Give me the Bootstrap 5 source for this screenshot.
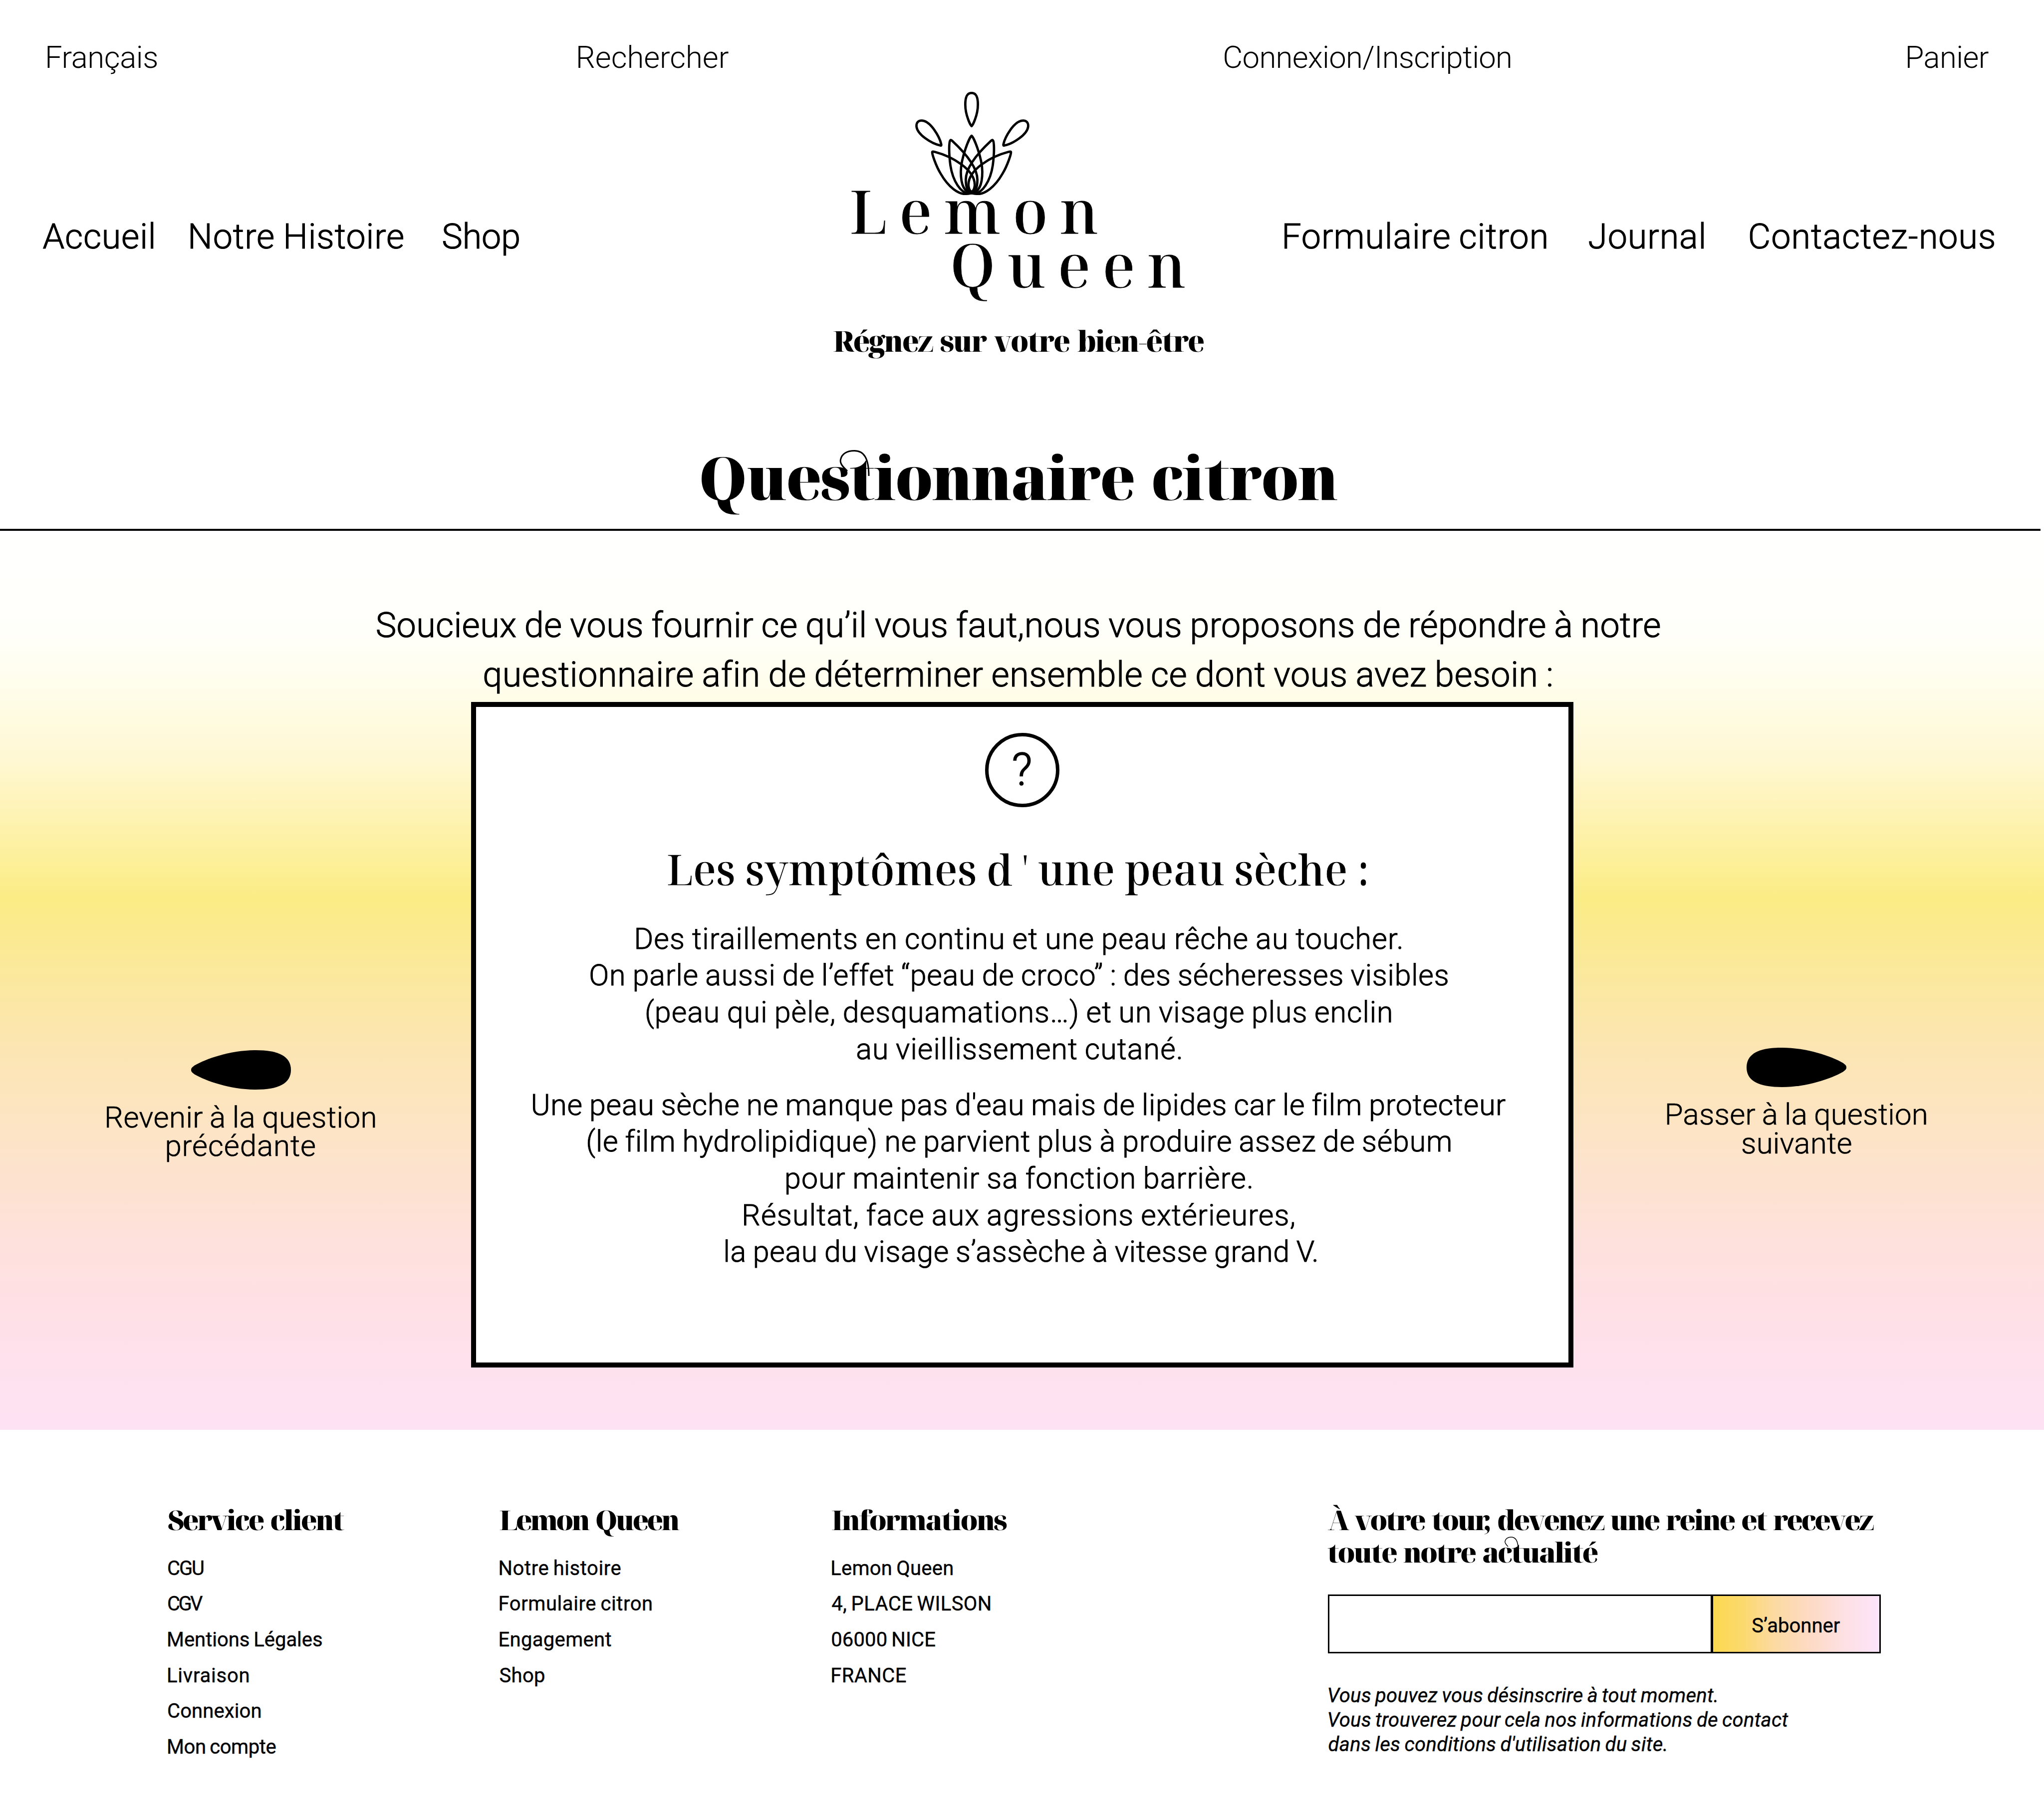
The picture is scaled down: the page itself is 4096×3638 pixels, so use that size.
<!DOCTYPE html>
<html lang="fr">
<head>
<meta charset="utf-8">
<meta name="viewport" content="width=device-width, initial-scale=1">
<title>Lemon Queen – Questionnaire citron</title>
<link href="https://cdn.jsdelivr.net/npm/bootstrap@5.3.0/dist/css/bootstrap.min.css" rel="stylesheet">
<style>
  body { font-family: Roboto, "Liberation Sans", sans-serif; font-weight: 300; color: #000; background: #fff; overflow-x: hidden; word-spacing: -2px; }
  a { color: inherit; text-decoration: none; }
  .display-face { font-family: "Noto Serif Display", "Liberation Serif", serif; font-weight: 500; word-spacing: 0; }
  .fat-face { font-family: "Noto Serif Display", "Liberation Serif", serif; font-weight: 900; word-spacing: .1em; }
  .fit { display: inline-block; white-space: nowrap; text-align: left; }

  /* Header */
  .site-header { height: 1060px; }
  .top-links { padding: 69px 0 0 95px; font-size: 61.6px; line-height: 92px; }
  .main-row { margin-top: 23px; }
  .main-links { padding-top: 240px; font-size: 70px; line-height: 100px; -webkit-text-stroke: 1.1px #000; }
  .brand { width: 742px; margin-left: 630px; margin-right: 162px; }
  .brand-crown { width: 229px; height: 207px; margin: 0 0 -23px 164px; }
  .brand-name { font-size: 119px; line-height: 108px; -webkit-text-stroke: .8px #000; }
  .brand-name .second { padding-left: 240px; }
  .brand-name .first { padding-left: 36.6px; }
  .tagline { font-size: 57px; line-height: 80px; margin-top: 59px; }
  .page-title { font-size: 120px; line-height: 160px; margin: 153px 0 0; padding-right: 10px; word-spacing: .08em; }
  .swash { position: absolute; fill: none; stroke: #000; overflow: visible; }
  .rule { width: 4089px; height: 3.5px; background: #000; }

  /* Questionnaire */
  .quiz { height: 1802.5px; padding-top: 140px;
    background: linear-gradient(180deg, #fff 0, #fffffd 80px, #fffffa 200px, #fffdea 321px, #fff8d4 454px, #fef3b6 562px, #fcef94 680px, #fbec85 736px, #fbe99b 874px, #fce5b3 1042px, #fde4c9 1235px, #fee1da 1403px, #fee0e6 1559px, #fde2f4 100%); }
  .intro { font-size: 70px; line-height: 99px; padding-right: 14px; -webkit-text-stroke: 1.1px #000; }
  .quiz-row { margin-top: 5.5px; }
  .step { font-size: 60px; line-height: 57.4px; -webkit-text-stroke: .7px #000; }
  .step svg { width: 200px; height: 79px; margin-bottom: 26.6px; }
  .step-prev { width: 943.5px; padding: 698px 0 0 22px; }
  .step-next { width: 943.5px; padding: 692.5px 48px 0 0; }
  .quiz-card { width: 2209px; height: 1334px; border: 10px solid #000; border-radius: 0; background: #fff; padding-top: 51.5px; }
  .help-mark { width: 149px; height: 149px; border: 7px solid #000; font-size: 91px; font-weight: 300; -webkit-text-stroke: 1.4px #000; }
  .quiz-card h2 { font-size: 83px; line-height: 110px; margin: 69px 18px 0 0; -webkit-text-stroke: .8px #000; }
  .quiz-card h2 i { font-style: normal; font-weight: 300; -webkit-text-stroke: 0; }
  .quiz-card p { font-size: 59px; line-height: 73.7px; margin: 0 12px 0 0; -webkit-text-stroke: 1px #000; }
  .quiz-card .para-one { margin-top: 48px; }
  .quiz-card .para-two { margin-top: 38.3px; }

  /* Footer */
  .site-footer { padding: 146.5px 0 0 337px; font-size: 40px; font-weight: 400; -webkit-text-stroke: .4px #000; }
  .site-footer h3 { font-size: 55px; line-height: 65.6px; margin: 0; -webkit-text-stroke: 0; }
  .foot-a { width: 664.5px; } .foot-b { width: 665.7px; } .foot-c { width: 993.4px; }
  .foot-list { margin-top: 29.7px; line-height: 71.6px; }
  .subscribe { width: 1108px; height: 118px; margin-top: 52.4px; }
  .subscribe .form-control { border: 3.3px solid #000; border-radius: 0; }
  .subscribe .btn { width: 339px; border: 3.3px solid #000; border-radius: 0; padding: 7px 0 0; font-size: 40px; color: #000;
    background: linear-gradient(90deg, #fdd94f 0, #fbd96e 18%, #fcdaa0 36%, #fddac4 58%, #fde0e2 78%, #fde4fb 100%); }
  .legal { margin: 60px 0 0 2px; line-height: 49.2px; font-style: italic; }
</style>
</head>
<body>
<header class="site-header">
  <nav class="top-links d-flex">
    <a href="#"><span class="fit" data-w="219.3">Français</span></a>
    <a href="#" style="margin-left:844.4px"><span class="fit" data-w="301">Rechercher</span></a>
    <a href="#" style="margin-left:993.6px"><span class="fit" data-w="573.8">Connexion/Inscription</span></a>
    <a href="#" style="margin-left:795.4px"><span class="fit" data-w="162.3">Panier</span></a>
  </nav>
  <div class="main-row d-flex align-items-start">
    <nav class="main-links d-flex" style="margin-left:86.4px">
      <a href="#"><span class="fit" data-w="220.3">Accueil</span></a>
      <a href="#" style="margin-left:75.4px"><span class="fit" data-w="425.9">Notre Histoire</span></a>
      <a href="#" style="margin-left:80.4px"><span class="fit" data-w="151.8">Shop</span></a>
    </nav>
    <div class="brand d-flex flex-column align-items-start flex-shrink-0">
      <svg class="brand-crown" viewBox="0 0 279.3 252.6" fill="none" stroke="#000" stroke-width="5.8" stroke-linejoin="round">
        <path d="M137.8 84C136 84 122.4 58 122.4 31C122.4 10 128 2.8 137.8 2.8C147.6 2.8 153.2 10 153.2 31C153.2 58 139.6 84 137.8 84Z"/>
        <g id="drop"><path d="M62 131.5C40 127 3 104 3 83C3 74 9 70.3 15.3 70.3C38 70.3 60 112 63.5 128C64 131 63.5 132 62 131.5Z"/></g>
        <use href="#drop" transform="translate(279.2) scale(-1 1)"/>
        <path d="M137.8 107.5C134 108 111.5 160 111.5 196C111.5 230 122 246 137.8 248C153.6 246 164 230 164 196C164 160 141.6 108 137.8 107.5Z"/>
        <g id="petals">
          <path d="M86 118.5C82 122 82 150 86 180C92 220 112 247 130 249C146 250 152 236 152 215C152 180 110 138 90 119.5C88 118 87 117.5 86 118.5Z"/>
          <path d="M41.5 147.5C41 152 50 180 62 200C82 235 106 250 122 250C138 250 145 240 145.5 228C146 190 90 158 48 147C44 146 41.8 146 41.5 147.5Z"/>
        </g>
        <use href="#petals" transform="translate(275.6) scale(-1 1)"/>
      </svg>
      <div class="brand-name display-face">
        <div class="first"><span class="fit" data-w="492.1">Lemon</span></div>
        <div class="second"><span class="fit" data-w="463.9">Queen</span></div>
      </div>
      <div class="tagline fat-face"><span class="fit" data-w="741.9">Régnez sur votre bien-être</span></div>
    </div>
    <nav class="main-links d-flex">
      <a href="#"><span class="fit" data-w="524.5">Formulaire citron</span></a>
      <a href="#" style="margin-left:85.6px"><span class="fit" data-w="229.3">Journal</span></a>
      <a href="#" style="margin-left:93.2px"><span class="fit" data-w="489.3">Contactez-nous</span></a>
    </nav>
  </div>
  <h1 class="page-title fat-face text-center">
    <span class="position-relative d-inline-block"><span class="fit" data-w="1275">Questionnaire citron</span><svg class="swash" style="left:277px;top:26px" width="62" height="56" viewBox="0 0 62 56" stroke-width="3"><path d="M15 42C4 32 0 26 1.5 19C4 7 15 1.5 29 1.5C48 1.5 58 16 58 52"/></svg></span>
  </h1>
</header>
<div class="rule"></div>

<main class="quiz">
  <div class="intro d-flex flex-column align-items-center">
    <span class="fit" data-w="2570.5">Soucieux de vous fournir ce qu’il vous faut,nous vous proposons de répondre à notre</span>
    <span class="fit me-1" data-w="2137.7">questionnaire afin de déterminer ensemble ce dont vous avez besoin :</span>
  </div>
  <div class="quiz-row d-flex align-items-start">
    <a href="#" class="step step-prev d-flex flex-column align-items-center">
      <svg viewBox="0 0 200 79"><path id="seed" d="M0 39.5C0 36 2 34 7 30.5C30 17 80 0 129 0C175 0 200 12 200 39.5C200 67 175 79 129 79C80 79 30 62 7 48.5C2 45 0 43 0 39.5Z"/></svg>
      <span class="fit" data-w="537.5">Revenir à la question</span>
      <span class="fit" data-w="296.7">précédante</span>
    </a>
    <section class="quiz-card card d-flex flex-column align-items-center flex-shrink-0">
      <div class="help-mark rounded-circle d-flex align-items-center justify-content-center">?</div>
      <h2 class="display-face"><span class="fit" data-w="1401.5">Les symptômes d <i>'</i> une peau sèche :</span></h2>
      <p class="para-one d-flex flex-column align-items-center">
        <span class="fit" data-w="1533.2">Des tiraillements en continu et une peau rêche au toucher.</span>
        <span class="fit" data-w="1717.4">On parle aussi de l’effet “peau de croco” : des sécheresses visibles</span>
        <span class="fit" data-w="1492">(peau qui pèle, desquamations…) et un visage plus enclin</span>
        <span class="fit" data-w="649.5">au vieillissement cutané.</span>
      </p>
      <p class="para-two d-flex flex-column align-items-center">
        <span class="fit" data-w="1948.5">Une peau sèche ne manque pas d'eau mais de lipides car le film protecteur</span>
        <span class="fit" data-w="1727.6">(le film hydrolipidique) ne parvient plus à produire assez de sébum</span>
        <span class="fit" data-w="931.8">pour maintenir sa fonction barrière.</span>
        <span class="fit" data-w="1101.6">Résultat, face aux agressions extérieures,</span>
        <span class="fit ms-2" data-w="1184.9">la peau du visage s’assèche à vitesse grand V.</span>
      </p>
    </section>
    <a href="#" class="step step-next d-flex flex-column align-items-center">
      <svg viewBox="0 0 200 79"><use href="#seed" transform="translate(200) scale(-1 1)"/></svg>
      <span class="fit" data-w="519.1">Passer à la question</span>
      <span class="fit" data-w="218.6">suivante</span>
    </a>
  </div>
</main>

<footer class="site-footer d-flex">
  <div class="foot-a">
    <h3 class="fat-face"><span class="fit" data-w="353.3">Service client</span></h3>
    <ul class="foot-list list-unstyled mb-0">
      <li><span class="fit" data-w="71">CGU</span></li>
      <li><span class="fit" data-w="69">CGV</span></li>
      <li><span class="fit" data-w="308">Mentions Légales</span></li>
      <li><span class="fit" data-w="161.5">Livraison</span></li>
      <li><span class="fit" data-w="185.5">Connexion</span></li>
      <li><span class="fit" data-w="215.5">Mon compte</span></li>
    </ul>
  </div>
  <div class="foot-b">
    <h3 class="fat-face"><span class="fit" data-w="360.5">Lemon Queen</span></h3>
    <ul class="foot-list list-unstyled mb-0">
      <li><span class="fit" data-w="242">Notre histoire</span></li>
      <li><span class="fit" data-w="304.5">Formulaire citron</span></li>
      <li><span class="fit" data-w="223">Engagement</span></li>
      <li><span class="fit" data-w="89.5">Shop</span></li>
    </ul>
  </div>
  <div class="foot-c">
    <h3 class="fat-face"><span class="fit" data-w="350.9">Informations</span></h3>
    <ul class="foot-list list-unstyled mb-0">
      <li><span class="fit" data-w="242">Lemon Queen</span></li>
      <li><span class="fit" data-w="317.5">4, PLACE WILSON</span></li>
      <li><span class="fit" data-w="207">06000 NICE</span></li>
      <li><span class="fit" data-w="148.5">FRANCE</span></li>
    </ul>
  </div>
  <div>
    <h3 class="fat-face d-flex flex-column"><span class="fit" data-w="1095">À votre tour, devenez une reine et recevez</span><span class="position-relative"><span class="fit" data-w="541">toute notre actualité</span><svg class="swash" style="left:354px;top:2px" width="28" height="26" viewBox="0 0 28 26" stroke-width="1.5"><path d="M7 20C2 15 0 12 1 9C2 4 7 1 13 1C22 1 27 8 27 24"/></svg></span></h3>
    <form class="subscribe input-group flex-nowrap">
      <input type="email" class="form-control" aria-label="Adresse e-mail">
      <button type="button" class="btn"><span class="fit" data-w="175.5">S’abonner</span></button>
    </form>
    <div class="legal d-flex flex-column">
      <span class="fit" data-w="777.4">Vous pouvez vous désinscrire à tout moment.</span>
      <span class="fit" data-w="921">Vous trouverez pour cela nos informations de contact</span>
      <span class="fit" data-w="676">dans les conditions d'utilisation du site.</span>
    </div>
  </div>
</footer>

<script src="https://cdn.jsdelivr.net/npm/bootstrap@5.3.0/dist/js/bootstrap.bundle.min.js"></script>
<script>
  // Track each line of text so that its ink spans exactly the width in data-w
  const ctx = document.createElement('canvas').getContext('2d');
  document.querySelectorAll('.fit').forEach(el => {
    const s = getComputedStyle(el), text = el.textContent, w = +el.dataset.w;
    ctx.font = `${s.fontStyle} ${s.fontWeight} ${s.fontSize} ${s.fontFamily}`;
    const m = ctx.measureText(text);
    const spaces = (text.split(' ').length - 1) * (parseFloat(s.wordSpacing) || 0);
    const ink = m.actualBoundingBoxLeft + m.actualBoundingBoxRight + spaces;
    el.style.letterSpacing = ((w - ink) / (text.length - 1)).toFixed(3) + 'px';
    el.style.textIndent = m.actualBoundingBoxLeft.toFixed(2) + 'px';
    el.style.width = w + 'px';
  });
</script>
</body>
</html>
